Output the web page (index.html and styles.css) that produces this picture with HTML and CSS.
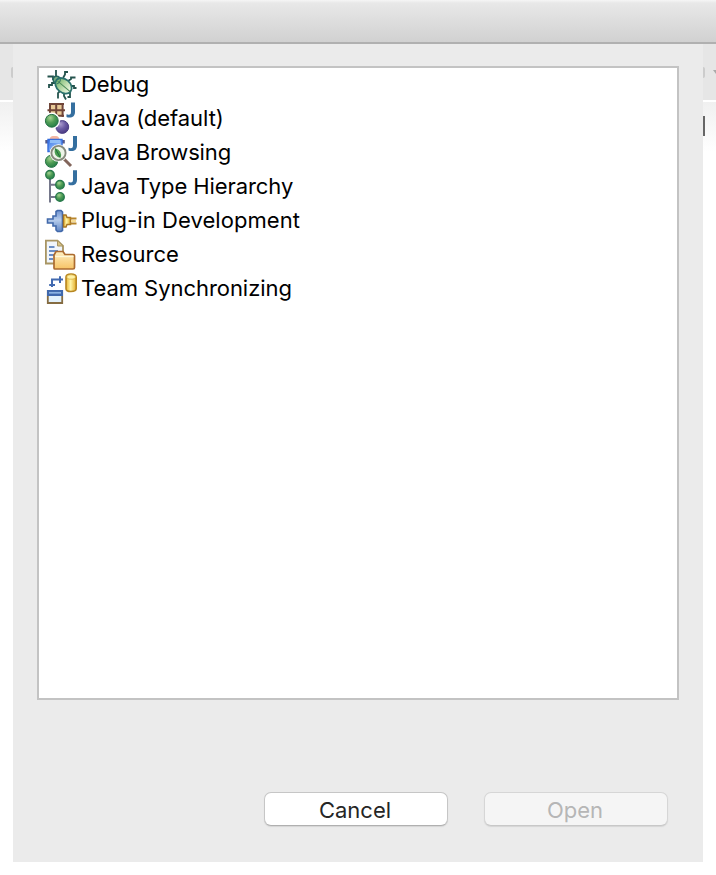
FILE: index.html
```html
<!DOCTYPE html>
<html lang="en">
<head>
<meta charset="utf-8">
<title>Open Perspective</title>
<link rel="stylesheet" href="styles.css">
</head>
<body>
<svg class="defs" width="0" height="0" aria-hidden="true">
  <defs>
    <radialGradient id="green" cx=".38" cy=".28" r=".75"><stop offset="0" stop-color="#a4d291"/><stop offset=".5" stop-color="#4f9c55"/><stop offset="1" stop-color="#237c46"/></radialGradient>
    <radialGradient id="purple" cx=".36" cy=".28" r=".75"><stop offset="0" stop-color="#a99bcd"/><stop offset=".5" stop-color="#6c5ca4"/><stop offset="1" stop-color="#493982"/></radialGradient>
    <linearGradient id="shell"><stop offset="0" stop-color="#72b36a"/><stop offset=".5" stop-color="#b6d9a7"/><stop offset="1" stop-color="#f3fae9"/></linearGradient>
    <linearGradient id="folder" x2="0" y2="1"><stop offset="0" stop-color="#fff0c3"/><stop offset="1" stop-color="#f6c365"/></linearGradient>
    <linearGradient id="gold"><stop offset="0" stop-color="#e8b42e"/><stop offset=".45" stop-color="#fff4a8"/><stop offset="1" stop-color="#e3ac25"/></linearGradient>
    <linearGradient id="plug" x2="0" y2="1"><stop offset="0" stop-color="#6e91cf"/><stop offset=".45" stop-color="#b7cdec"/><stop offset="1" stop-color="#6086c5"/></linearGradient>
    <linearGradient id="blue" x2="1" y2="1"><stop offset="0" stop-color="#3974e7"/><stop offset="1" stop-color="#b9dcff"/></linearGradient>
    <path id="jay" d="M5 0H9v9.2c0 4-2 5.8-5.6 5.8-1.2 0-2-.1-2.9-.5V11.8c.8.3 1.5.4 2.3.4 1.7 0 2.2-.9 2.2-2.9z" fill="#356f9f"/>
  </defs>
</svg>
<header class="titlebar"></header>
<div class="stage">
  <div class="behind left"><div class="tools"><i class="knob"></i></div><div class="content"></div></div>
  <main class="dialog">
    <ul class="list">
      <li class="row"><svg class="icon" viewBox="0 0 32 32">
        <g fill="none" stroke="#24534d" stroke-width="1.8"><path d="M11 8V1M12 10H8V7.5H2.5M10 14H7V16H4V19M18 9L20 5.5V3H23M23 12L26 10V8.5H30.5M27 17H29V19H31.5M23 24H25V28H22.5M15 22L13 24V29.5M19 24V27L21 30.5"/></g>
        <circle cx="11.5" cy="10.5" r="3.3" fill="#7eb083" stroke="#286760" stroke-width="1.6"/>
        <g transform="rotate(40 18.5 16.8)"><ellipse cx="18.5" cy="16.8" rx="9.1" ry="6.7" fill="url(#shell)" stroke="#2b716d" stroke-width="1.8"/><path d="M11 17H27" stroke="#4b8b58"/><path d="M12 13.5Q14 17 12 20" stroke="#397768" fill="none"/></g>
      </svg><span class="t1">Debug</span></li>
      <li class="row"><svg class="icon" viewBox="0 0 32 32">
        <path d="M4 1H18V13H4z" fill="#e8ca98"/><path d="M5 0V14M11.2 0V14M17.6 0V14M4 1H19M2.5 7.2H20M4 12.8H19" stroke="#704539" stroke-width="2"/>
        <use href="#jay" x="21" y="-.5"/>
        <circle cx="17.3" cy="24" r="6.4" fill="url(#purple)" stroke="#4d4084"/><circle cx="6.8" cy="17.8" r="8.2" fill="#fff"/><circle cx="6.8" cy="17.8" r="6.4" fill="url(#green)" stroke="#237044"/>
      </svg><span class="t2">Java (default)</span></li>
      <li class="row"><svg class="icon" viewBox="0 0 32 32">
        <circle cx="6.5" cy="24.3" r="6.1" fill="url(#green)" stroke="#2a774a"/><path d="M4.5 2.5Q5-1 8-1H11Q14-1 14.5 2.5z" fill="#f3b6a2"/><path d="M.3 3H19.8V6.5H.3z" fill="#565c8d"/><path d="M3 2.5H17V14.5H3z" fill="url(#blue)" stroke="#356ddd" stroke-width="1.4"/><path d="M5 3H15V6H5z" fill="#8fbdf8"/>
        <use href="#jay" x="23" y="-1"/>
        <path d="M18 21L26 29" stroke="#fff" stroke-width="5"/><path d="M18.5 21.5L26 29" stroke="#82655b" stroke-width="3"/><circle cx="13.5" cy="16" r="8.8" fill="#fff"/><circle cx="13.5" cy="16" r="7.1" fill="#edf4e8" stroke="#858a7c" stroke-width="1.9"/><path d="M10 11Q18 14 15.5 21Q8 19 10 11z" fill="#4c9e51"/><path d="M10.5 12L15 20" stroke="#226c42"/>
      </svg><span class="t3">Java Browsing</span></li>
      <li class="row"><svg class="icon" viewBox="0 0 32 32">
        <path d="M5 7V31.5M5 13.8H12M5 26H12" fill="none" stroke="#75788b" stroke-width="2"/><g fill="url(#green)" stroke="#26784a" stroke-width="1.3"><circle cx="5" cy="3.8" r="4.3"/><circle cx="15" cy="13.8" r="4.3"/><circle cx="15" cy="26" r="4.3"/></g>
        <use href="#jay" x="23" y="-.8"/>
      </svg><span class="t4">Java Type Hierarchy</span></li>
      <li class="row"><svg class="icon" viewBox="0 0 32 32">
        <path d="M2.5 14H8V11H11V6.5L12.5 5.5H16L17.5 7V25.5L16 26.5H12.5L11 25V21H8V18H2.5z" fill="url(#plug)" stroke="#4269aa" stroke-width="1.6"/><path d="M18.5 10H21L22 12.5H25.5V19.5H22L21 22H18.5z" fill="url(#gold)" stroke="#a87625" stroke-width="1.5"/><path d="M25.5 13.5H31.5M25.5 18.5H31.5" stroke="#b8852b" stroke-width="2.2"/><path d="M26 16H31" stroke="#f6dc94" stroke-width="2"/>
      </svg><span class="t5">Plug-in Development</span></li>
      <li class="row"><svg class="icon" viewBox="0 0 32 32">
        <path d="M.9 1.6H12.5L18 7V24.5H.9z" fill="#f0f5fb" stroke="#a89563" stroke-width="1.8"/><path d="M12.5 1.6V7H18z" fill="#d9c385" stroke="#a89563"/><path d="M4 8H9.5M4 12H13M4 16H9M4 20H8" stroke="#6b8ec5" stroke-width="1.8"/>
        <path d="M9 29V16L11 12.5H18L20 15.5H28Q29.5 15.5 29.5 17V28.5Q29.5 30 28 30H10Q9 30 9 29z" fill="url(#folder)" stroke="#ac6b30" stroke-width="1.7"/><path d="M10 17.5H28.5" stroke="#fff8d9" stroke-width="1.3"/>
      </svg><span class="t6">Resource</span></li>
      <li class="row"><svg class="icon" viewBox="0 0 32 32">
        <path d="M7 14V6.5H18M4.2 12H10M15 3.2V10" fill="none" stroke="#426ab0" stroke-width="2"/><path d="M21 4Q21 1 26 1T31.2 4V15.5Q31.2 18.5 26 18.5T21 15.5z" fill="url(#gold)" stroke="#b78622" stroke-width="1.6"/><ellipse cx="26.1" cy="4" rx="4.3" ry="2.2" fill="#fff1a5" stroke="#d1a83c" stroke-width=".7"/>
        <path d="M2.8 17.8H17.2V30H2.8z" fill="#e2f1fc" stroke="#856c42" stroke-width="1.8"/><path d="M2 17H18V23H2z" fill="#3f68ad"/><path d="M4 19.8H16" stroke="#8cb3e3" stroke-width="1.7"/>
      </svg><span class="t7">Team Synchronizing</span></li>
    </ul>
    <div class="actions"><button class="button" type="button">Cancel</button><button class="button disabled" type="button" disabled>Open</button></div>
  </main>
  <div class="behind right"><div class="tools"><i class="knob"></i><i class="caret"></i></div><div class="content"><i class="mark"></i></div></div>
</div>
</body>
</html>
```
FILE: styles.css
```css
* { box-sizing: border-box; }
body { margin: 0; width: 716px; height: 875px; overflow: hidden; background: #fff; font-family: Inter, "Liberation Sans", sans-serif; font-size: 22px; color: #000; }
.defs { position: absolute; }
.titlebar { height: 44px; background: linear-gradient(#f6f6f6, #e8e8e8 3px, #d1d1d1 42px); border-bottom: 2px solid #b0b0b0; }
.stage { display: grid; grid-template-columns: 13px 690px 13px; align-items: start; }
.tools { display: flex; align-items: center; justify-content: space-between; height: 56px; background: #e6e6e6; overflow: hidden; }
.left .tools { justify-content: flex-end; }
.knob { width: 2px; height: 11px; background: #ccc; }
.left .knob { border-radius: 2px 0 0 2px; }
.right .knob { border-radius: 0 2px 2px 0; }
.caret { width: 3px; height: 4px; background: #aaa; clip-path: polygon(0 0, 100% 0, 100% 100%); }
.content { height: 50px; margin-top: 2px; padding-top: 14px; background: linear-gradient(#f0f0f0, #fff); }
.mark { display: block; width: 2px; height: 20px; background: #666; }
.dialog { height: 818px; padding: 22px 24px; background: #ebebeb; }
.list { height: 634px; margin: 0; padding: 0 6px; list-style: none; background: #fff; border: 2px solid #c3c3c3; }
.row { display: flex; align-items: center; gap: 4px; height: 34px; white-space: nowrap; }
.row span { padding-bottom: 2px; }
.t1 { letter-spacing: -.1px; }
.t2 { letter-spacing: -.05px; }
.t3 { letter-spacing: -.15px; }
.t4 { letter-spacing: -.08px; }
.t5 { letter-spacing: .06px; }
.t7 { letter-spacing: -.05px; }
.icon { flex: none; width: 32px; height: 32px; overflow: visible; }
.actions { display: flex; justify-content: flex-end; gap: 36px; margin-top: 92px; padding-right: 11px; }
.button { width: 184px; height: 34px; padding: 2px 2px 0 0; border: 1px solid #c6c6c6; border-bottom-color: #b0b0b0; border-radius: 7px; background: #fff; box-shadow: 0 1px 1px #d5d5d5; color: #252525; font: inherit; line-height: 30px; }
.button.disabled { border-color: #d6d6d6; border-bottom-color: #c8c8c8; background: #f5f5f5; color: #b6b6b6; }
```
